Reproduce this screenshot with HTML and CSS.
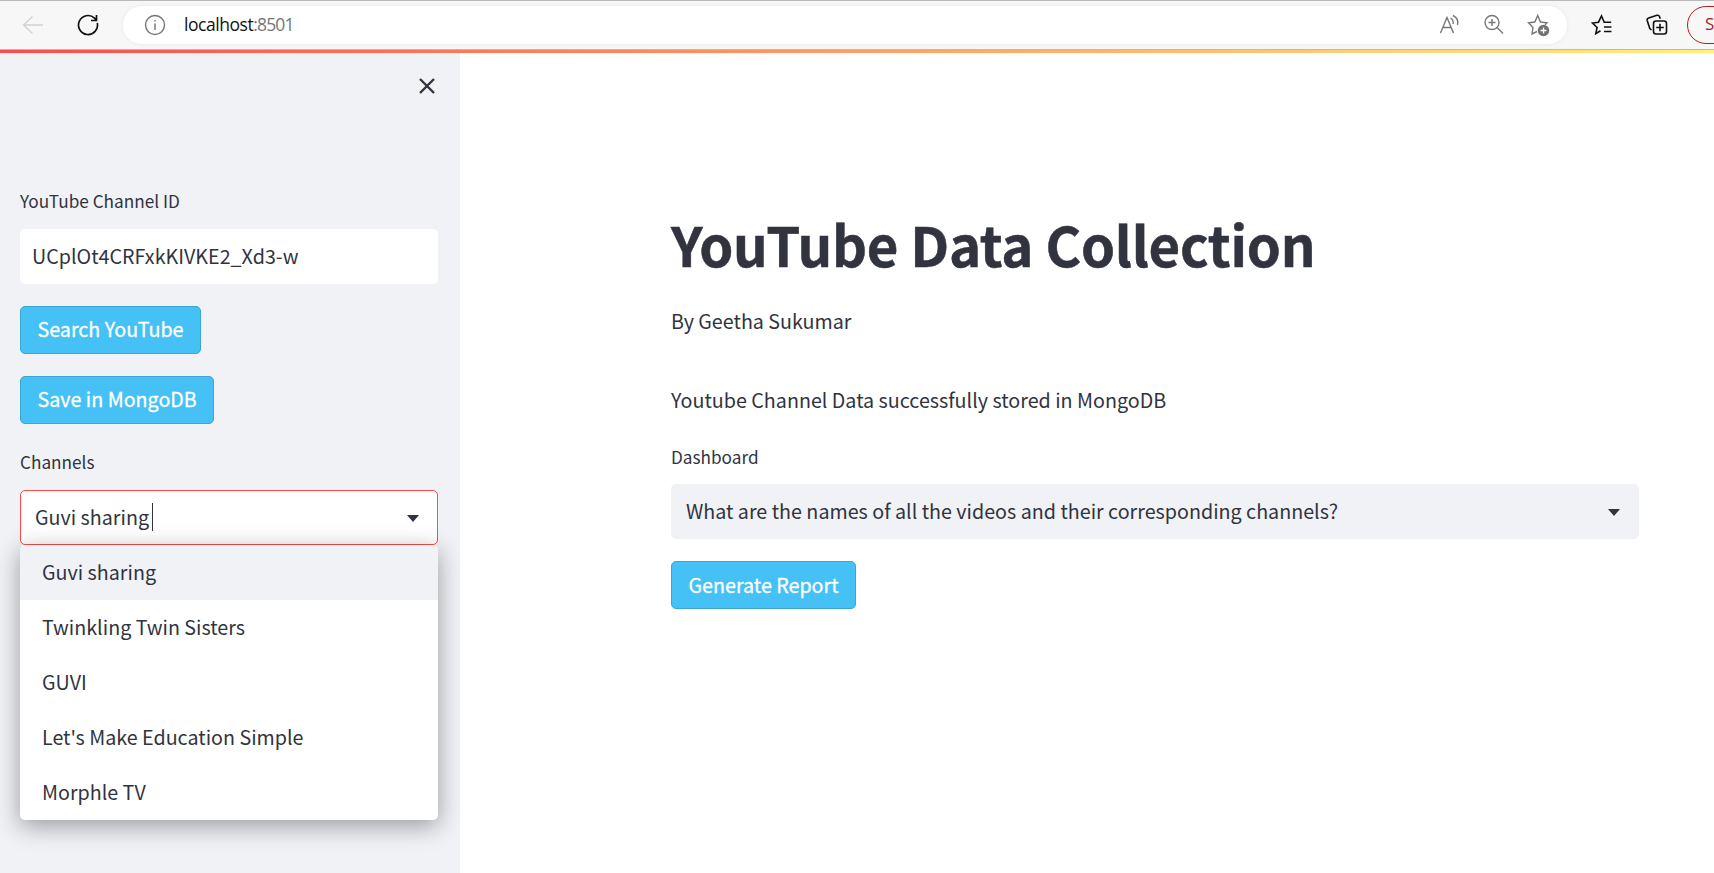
FILE: index.html
```
<!DOCTYPE html>
<html lang="en">
<head>
<meta charset="utf-8">
<title>YouTube Data Collection</title>
<link rel="stylesheet" href="styles.css">
</head>
<body>
<header class="toolbar">
  <svg class="back" width="22" height="20" viewBox="0 0 22 20"><path d="M21 10H1.500M10.500 1.500 1.500 10l9 8.500"/></svg>
  <svg class="reload" width="22" height="22" viewBox="0 0 22 22"><path d="M20.300 9A9.500 9.500 0 1 1 17.500 4.100L19 5.600M19.500 1v5.500H14"/></svg>
  <div class="address">
    <svg class="info" width="22" height="22" viewBox="0 0 22 22"><circle cx="11" cy="11" r="9.500"/><path d="M11 9.500v6.500M11 6v1.500"/></svg>
    <span class="url">localhost<span class="port">:8501</span></span>
    <svg class="read" width="22" height="22" viewBox="0 0 22 22"><path d="M1.500 19 8 3.500 14.500 19M4 13.500h8M11.500 4c2 1.200 3 3.500 2.500 6M14 1.500c4 2 5.500 5.500 4.500 9.500"/></svg>
    <svg class="zoom" width="22" height="22" viewBox="0 0 22 22"><circle cx="9" cy="8.500" r="7"/><path d="M9 5v7M5.500 8.500h7M14 13.500l6 6"/></svg>
    <svg class="favorite" width="24" height="24" viewBox="0 0 24 24"><path d="M10 18.500 5 21l1-6.500L1.500 9.800 7.800 9l2.900-6.500L13.500 9l6.500.8-2 2"/><circle class="disc" cx="16.500" cy="17.500" r="5.700"/><path class="plus" d="M16.500 14.500v6M13.500 17.500h6"/></svg>
  </div>
  <svg class="collections-star" width="22" height="22" viewBox="0 0 22 22"><path d="M9.500 16.800 4.800 19.700l1.300-6.200L1.500 9l6-.8L10.500 2l2.700 6.200h7M13 13h7.500M13 17.500h7.500"/></svg>
  <svg class="collections" width="22" height="22" viewBox="0 0 22 22"><path d="M5.500 16 3.800 14.500 1.200 6.500Q.8 4.600 2.600 4L11 1.300q1.900-.4 2.600 1.400l.6 2"/><rect x="7.500" y="7" width="13" height="13" rx="2.500"/><path d="M14 9.700v7.600M10.200 13.500h7.600"/></svg>
  <div class="profile">S</div>
  <i class="tab-gap"></i>
</header>
<div class="decoration"></div>
<div class="app">
  <aside class="sidebar">
    <svg class="close" width="18" height="18" viewBox="0 0 18 18"><path d="M2 2l14 14M16 2 2 16"/></svg>
    <label class="label">YouTube Channel ID</label>
    <div class="field input"><span>UCplOt4CRFxkKIVKE2_Xd3-w</span></div>
    <button class="button">Search YouTube</button>
    <button class="button">Save in MongoDB</button>
    <label class="label channels">Channels</label>
    <div class="field select open"><span>Guvi sharing</span><i class="caret"></i><i class="arrow"></i>
      <ul class="menu">
        <li class="active">Guvi sharing</li>
        <li>Twinkling Twin Sisters</li>
        <li>GUVI</li>
        <li>Let's Make Education Simple</li>
        <li>Morphle TV</li>
      </ul>
    </div>
  </aside>
  <main class="main">
    <h1>YouTube Data Collection</h1>
    <p>By Geetha Sukumar</p>
    <p class="status">Youtube Channel Data successfully stored in MongoDB</p>
    <label class="label">Dashboard</label>
    <div class="field select"><span>What are the names of all the videos and their corresponding channels?</span><i class="arrow"></i></div>
    <button class="button">Generate Report</button>
  </main>
</div>
</body>
</html>
```
FILE: styles.css
```
* { box-sizing: border-box; }
body {
  margin: 0;
  height: 873px;
  overflow: hidden;
  display: flex;
  flex-direction: column;
  background: #fff;
  color: #31333f;
  font: 19.7px/35px "Noto Sans CJK SC", "Noto Sans", sans-serif;
}
svg { fill: none; stroke: currentColor; stroke-width: 1.4; flex: none; }
.toolbar {
  position: relative;
  flex: none;
  display: flex;
  align-items: center;
  height: 50px;
  padding-left: 22px;
  background: #f7f7f7;
  border-top: 1px solid #b9b9b9;
  border-bottom: 1px solid #b9b9b9;
  color: #111;
  overflow: hidden;
}
.tab-gap { position: absolute; left: 488px; top: -1px; width: 154px; height: 1px; background: #f7f7f7; }
.back { color: #d2d2d2; }
.reload { margin-left: 33px; stroke-width: 1.7; }
.address {
  flex: none;
  display: flex;
  align-items: center;
  width: 1444px;
  height: 38px;
  margin-left: 24px;
  padding-left: 21px;
  border-radius: 19px;
  background: #fff;
  box-shadow: 0 0 5px rgba(0,0,0,.06);
  color: #767676;
}
.url { margin: -2px 0 0 18px; flex: 1; color: #111; font: 17.5px/36px "Open Sans", sans-serif; letter-spacing: -0.45px; }
.port { color: #767676; letter-spacing: -0.85px; }
.read { margin-right: 22px; }
.zoom { margin-right: 22px; }
.favorite { margin-right: 16px; }
.disc { fill: #707070; stroke: none; }
.plus { stroke: #fff; }
.collections-star { margin-left: 24px; stroke-width: 1.6; }
.collections { margin-left: 33px; stroke-width: 1.6; }
.profile {
  flex: none;
  width: 60px;
  height: 38px;
  margin-left: 19px;
  padding-left: 17px;
  border: 1.5px solid #b1201c;
  border-radius: 19px;
  color: #b1201c;
  font: 17px/34px "Open Sans", sans-serif;
}
.decoration { flex: none; height: 3px; background: linear-gradient(90deg, #ff4b4b, #fffd80 108%); }
.app { flex: 1; display: flex; min-height: 0; }
.sidebar {
  width: 460px;
  padding: 24px 22px 0 20px;
  background: #f0f2f6;
  display: flex;
  flex-direction: column;
  align-items: flex-start;
}
.close { align-self: flex-end; margin-right: 2px; stroke-width: 2.4; }
.label { font-size: 17.2px; line-height: 28px; }
.sidebar > .label { margin-top: 92px; }
.sidebar > .channels { margin-top: 24px; }
.field {
  position: relative;
  display: flex;
  align-items: center;
  width: 418px;
  height: 55px;
  padding: 0 19px 2px 15px;
  border-radius: 5px;
  background: #f0f2f6;
}
.sidebar .field { background: #fff; margin-top: 14px; }
.sidebar .input { padding-left: 12px; }
.field.open { border: 1px solid #ff4b4b; padding-left: 14px; padding-right: 18px; }
.caret { width: 1px; height: 28px; margin-left: 3px; background: #31333f; }
.arrow { margin: 4px 0 0 auto; border: 6.5px solid transparent; border-top: 7px solid #31333f; border-bottom: 0; }
.button {
  height: 48px;
  margin-top: 22px;
  padding: 0 16.5px 2px;
  border: 1px solid #3ba5d3;
  border-radius: 5px;
  background: #45c1f6;
  color: #fff;
  font: inherit;
  white-space: nowrap;
  -webkit-text-stroke: 0.3px #fff;
}
.sidebar .button { padding-bottom: 4px; }
.menu {
  position: absolute;
  z-index: 2;
  left: -1px;
  top: 54px;
  width: 418px;
  height: 275px;
  margin: 0;
  padding: 0;
  list-style: none;
  overflow: hidden;
  border-radius: 5px;
  background: #fff;
  box-shadow: 0 6px 24px rgba(0,0,0,.37);
}
.menu li { height: 55px; padding-left: 22px; line-height: 53px; }
.menu .active { background: #f0f2f6; }
.main { flex: 1; padding: 154px 75px 0 211px; }
.main .label { display: block; margin-top: 26px; }
.main .field { width: 968px; margin-top: 13px; }
h1 { margin: 0 0 23px; font-size: 54.5px; line-height: 73px; font-weight: 700; letter-spacing: -0.25px; -webkit-text-stroke: 0.5px #31333f; }
p { margin: 0; }
.status { margin-top: 44px; }
```
